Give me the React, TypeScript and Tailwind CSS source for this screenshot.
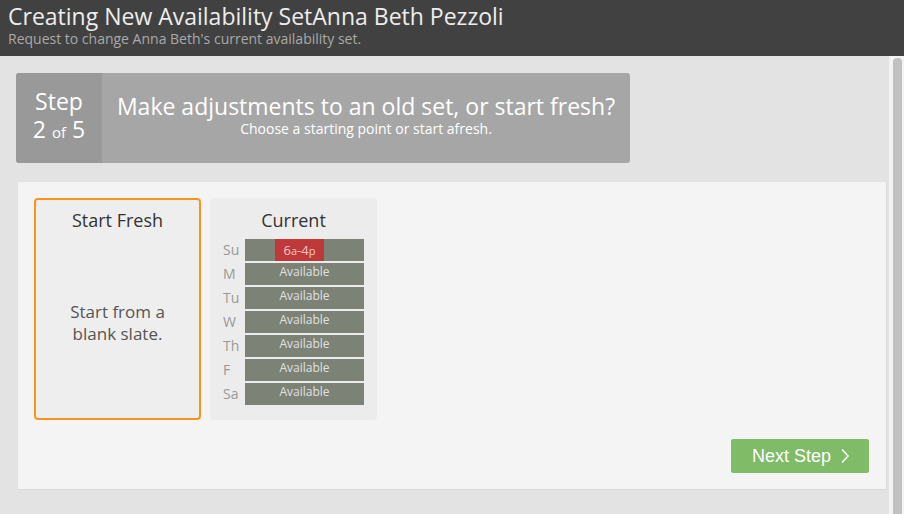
import React from "react";

const days = ["Su", "M", "Tu", "W", "Th", "F", "Sa"];

export default function App() {
  return (
    <div className="w-[904px] h-[514px] overflow-hidden flex flex-col bg-[#e3e3e3]" style={{ fontFamily: '"Open Sans", sans-serif' }}>
      <div className="h-[56px] bg-[#414141] px-[8px] pt-[2px] shrink-0">
        <div className="text-[23px] leading-[28px] text-[#ededed]">Creating New Availability SetAnna Beth Pezzoli</div>
        <div className="text-[14px] leading-[16px] text-[#a9a9a9] mt-[1px]">Request to change Anna Beth's current availability set.</div>
      </div>
      <div className="flex flex-1 min-h-0">
        <div className="flex-1 flex flex-col pl-[16px] pt-[17px]">
          <div className="w-[614px] h-[90px] flex rounded-[3px] overflow-hidden bg-[#a6a6a6] text-white">
            <div className="w-[86px] bg-[#999999] flex flex-col items-center justify-center pb-[2px]">
              <div className="text-[23px] leading-[27px]">Step</div>
              <div className="text-[23px] leading-[29px]">2 <span className="text-[15px]">of</span> 5</div>
            </div>
            <div className="flex-1 flex flex-col items-center pt-[19px]">
              <div className="text-[23px] leading-[29px]">Make adjustments to an old set, or start fresh?</div>
              <div className="text-[14px] leading-[16px]">Choose a starting point or start afresh.</div>
            </div>
          </div>
          <div className="ml-[2px] mr-[2px] mt-[19px] h-[308px] bg-[#f4f4f4] border-r border-b border-[#dadada] flex flex-col px-[16px] pt-[16px]">
            <div className="flex gap-[9px]">
              <div className="w-[167px] h-[222px] rounded-[4px] border-2 border-[#f7941d] bg-[#eeeeee] flex flex-col items-center">
                <div className="text-[18px] leading-[24px] text-[#333] mt-[8px]">Start Fresh</div>
                <div className="text-[17px] leading-[22px] text-[#555] text-center mt-[69px]">Start from a<br />blank slate.</div>
              </div>
              <div className="w-[167px] h-[222px] rounded-[4px] bg-[#ececec] flex flex-col">
                <div className="text-[18px] leading-[24px] text-[#333] mt-[10px] text-center">Current</div>
                <div className="mt-[7px] flex flex-col gap-[2px]">
                  {days.map((d, i) => (
                    <div key={d} className="flex items-center">
                      <div className="w-[35px] text-[14px] leading-[22px] text-[#999] pl-[13px]">{d}</div>
                      <div className="w-[119px] h-[22px] bg-[#7c8275] relative flex justify-center">
                        {i === 0 ? (
                          <div className="absolute left-[30px] top-0 w-[49px] h-[22px] bg-[#c0393a] text-[#f0c8c8] text-[13px] leading-[22px] text-center">
                            6<span className="text-[11px]">a</span>-4<span className="text-[11px]">p</span>
                          </div>
                        ) : (
                          <div className="text-[12px] leading-[18px] text-[#e0e0e0]">Available</div>
                        )}
                      </div>
                    </div>
                  ))}
                </div>
              </div>
            </div>
            <div className="flex justify-end mt-[19px] pr-[1px]">
              <button className="w-[138px] h-[34px] rounded-[2px] bg-[#80bb68] text-white text-[18px] flex items-center justify-center gap-[9px] pl-[2px]" style={{ fontFamily: '"Liberation Sans", Arial, sans-serif' }}>
                <span>Next Step</span>
                <svg width="10" height="16" viewBox="0 0 10 16" fill="none" stroke="white" strokeWidth="1.6">
                  <path d="M2 1.5 L8 8 L2 14.5" />
                </svg>
              </button>
            </div>
          </div>
        </div>
        <div className="w-[15px] bg-[#f3f3f3] flex justify-center pt-[2px] pl-[2px]">
          <div className="w-[9px] h-full bg-[#c1c1c1] rounded-t-[4px]" />
        </div>
      </div>
    </div>
  );
}
